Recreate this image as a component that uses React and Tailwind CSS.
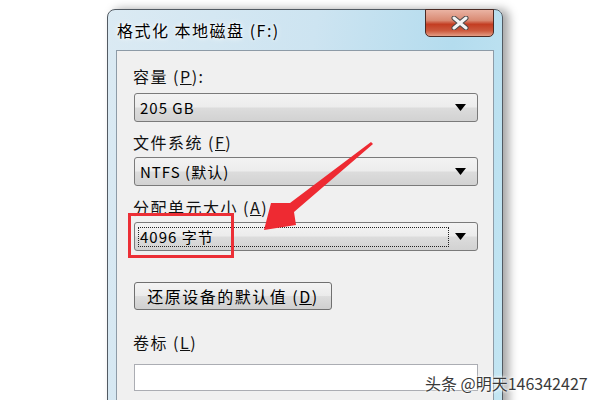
import React from 'react';

const font = { fontFamily: '"Noto Sans CJK SC", "Liberation Sans", sans-serif' };

const Caret = () => (
  <svg width="11" height="7" viewBox="0 0 11 7" className="shrink-0">
    <path d="M0 0 H11 L5.5 7 Z" fill="#000" />
  </svg>
);

const Combo = ({ children, focused }) => (
  <div className="relative h-[29px] w-[344px] ml-[1px] rounded-[3px] border border-[#7a7a7a] bg-[linear-gradient(#f3f3f3_0%,#ececec_48%,#dcdcdc_52%,#d2d2d2_100%)] flex items-center">
    {focused && (
      <div className="absolute left-[3px] top-[4px] w-[311px] h-[20px] border border-dotted border-[#222]" />
    )}
    <div className="flex-1 pl-[5px] text-[15px] tracking-[1px] text-black leading-none">{children}</div>
    <div className="w-[30px] flex justify-center pr-[4px]">
      <Caret />
    </div>
  </div>
);

const Label = ({ children, className }) => (
  <div className={`h-[20px] leading-[20px] text-[16px] tracking-[1.5px] text-[#111] ${className}`}>{children}</div>
);

export default function App() {
  return (
    <div className="relative w-[600px] h-[400px] overflow-hidden bg-white" style={font}>
      <div className="flex pt-[9px] pl-[107px]">
        {/* window frame */}
        <div className="relative w-[396px] h-[420px] rounded-t-[8px] border border-[#525a62] bg-[linear-gradient(100deg,#dbeaf3_0%,#cde4f1_45%,#b4dcee_75%,#c4e6f3_100%)] shadow-[6px_0_10px_rgba(0,0,0,0.35)]">
          {/* title bar */}
          <div className="h-[40px] flex items-center pl-[9px]">
            <span className="text-[16px] text-black tracking-[1.5px] [text-shadow:0_0_6px_#fff,0_0_3px_#fff]">
              格式化 本地磁盘 (F:)
            </span>
          </div>
          {/* close button */}
          <div className="absolute top-[-1px] right-[8px] w-[69px] h-[28px] rounded-b-[5px] border border-[#4a2a24] bg-[linear-gradient(#eab3a3_0%,#d98a73_40%,#c33d22_55%,#cc5a3e_80%,#e39c84_100%)] flex items-center justify-center">
            <svg width="20" height="14" viewBox="0 0 20 14">
              <path d="M4 2 L16 12 M16 2 L4 12" stroke="#4a4a4a" strokeWidth="5" strokeLinecap="round" />
              <path d="M4 2 L16 12 M16 2 L4 12" stroke="#f4f4f4" strokeWidth="3" strokeLinecap="round" />
            </svg>
          </div>
          {/* client area */}
          <div className="ml-[8px] mr-[8px] h-[380px] border border-[#8d9ba7] bg-[#f0f0f0] pl-[16px]">
            <Label className="mt-[15px]">容量 (<u>P</u>):</Label>
            <div className="mt-[7px]">
              <Combo>205 GB</Combo>
            </div>
            <Label className="mt-[10px]">文件系统 (<u>F</u>)</Label>
            <div className="mt-[5px]">
              <Combo>NTFS (默认)</Combo>
            </div>
            <Label className="mt-[11px]">分配单元大小 (<u>A</u>)</Label>
            <div className="mt-[5px]">
              <Combo focused>4096 字节</Combo>
            </div>
            <div className="mt-[31px] ml-[1px] w-[198px] h-[28px] rounded-[3px] border border-[#707070] bg-[linear-gradient(#f4f4f4_0%,#ebebeb_48%,#dddddd_52%,#cfcfcf_100%)] flex items-center justify-center text-[16px] tracking-[1.5px] text-black">
              还原设备的默认值 (<u>D</u>)
            </div>
            <Label className="mt-[22px]">卷标 (<u>L</u>)</Label>
            <div className="mt-[12px] ml-[1px] w-[344px] h-[27px] border border-[#abadb3] bg-white" />
          </div>
        </div>
      </div>

      {/* red highlight box */}
      <div className="absolute left-[128px] top-[213px] w-[106px] h-[45px] border-[3px] border-[#ec2f36]" />

      {/* red arrow */}
      <svg className="absolute left-0 top-0 pointer-events-none" width="600" height="400" viewBox="0 0 600 400">
        <polygon
          points="373,144 371,142 290,203 271,203 264,230 296,225 294,212"
          fill="#ee2a32"
        />
      </svg>

      {/* watermark */}
      <div className="absolute left-[425px] top-[371px] text-[16px] text-[#3a3a3a] [text-shadow:0_0_2px_#fff,0_0_3px_#fff,0_0_4px_#fff]">
        头条 @明天146342427
      </div>
    </div>
  );
}
